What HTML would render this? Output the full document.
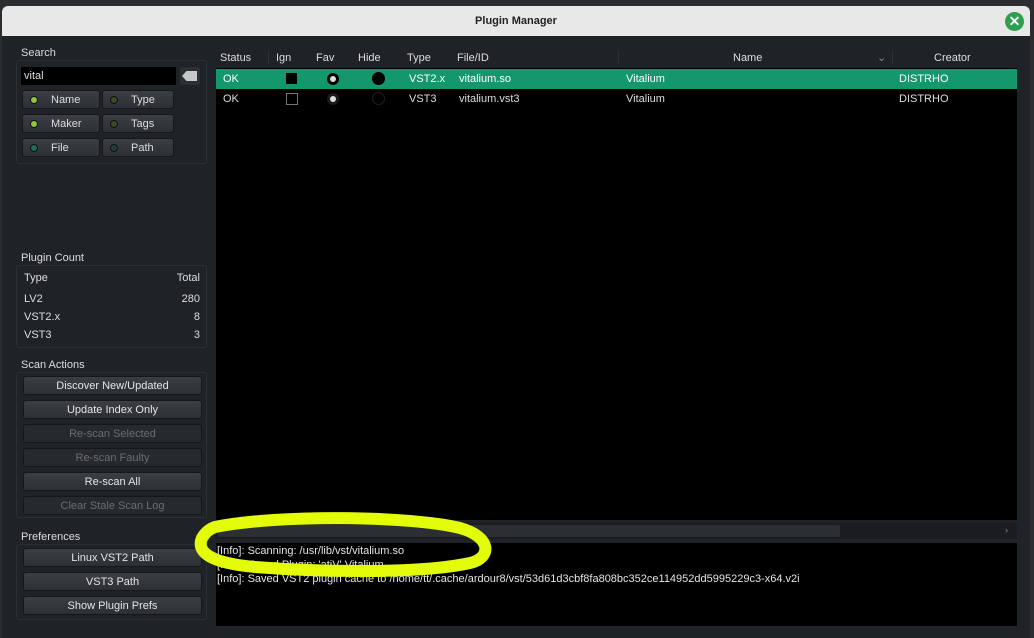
<!DOCTYPE html>
<html><head><style>
*{margin:0;padding:0;box-sizing:border-box}
body{width:1034px;height:638px;background:#2a2c30;font-family:"Liberation Sans",sans-serif;font-size:11px;color:#ddd;position:relative;overflow:hidden}
.a{position:absolute}
.win{left:2px;top:6px;width:1028px;height:632px;background:#1f2226;border-radius:6px 6px 0 0;overflow:hidden}
.title{left:0;top:0;width:1028px;height:30px;background:#e8e8e8;color:#222;font-weight:bold;font-size:11px;text-align:center;line-height:30px}
.grp{border:1px solid #2c2f34;border-radius:3px}
.lbl{color:#ddd;font-size:11px}
.btn{background:linear-gradient(#3b3e43,#2c2f33);border:1px solid #15171a;border-radius:3px;text-align:center;line-height:19px;height:19px;color:#e4e4e4}
.btn.dis{color:#6b6e72;background:#26292d}
.tog{background:linear-gradient(#3b3e43,#2c2f33);border:1px solid #15171a;border-radius:3px;height:19px;line-height:19px;color:#ddd;padding-left:28px}
.led{position:absolute;left:7px;top:5px;width:8px;height:8px;border-radius:50%;border:1px solid #111}
.hdr{top:47px;height:22px;line-height:22px;color:#ddd}
.row{left:216px;width:801px;height:20px;line-height:21px}
.c{position:absolute;top:0}
</style></head><body>
<div class="a win">
 <div class="a title">Plugin Manager</div>
 <div class="a" style="left:1003px;top:6px;width:19px;height:19px;border-radius:50%;background:#2e9e50;color:#fff;font-weight:bold;font-size:14px;line-height:19px;text-align:center">✕</div>
</div>
<!-- left panel -->
<div class="a grp" style="left:16px;top:60px;width:191px;height:104px"></div>
<div class="a lbl" style="left:21px;top:47px">Search</div>
<div class="a" style="left:21px;top:67px;width:155px;height:18px;background:#000;color:#ddd;padding-left:3px;line-height:18px">vital</div>
<div class="a" style="left:180px;top:67px;width:20px;height:18px;background:#2b2e32;border-radius:2px"><div class="a" style="left:2px;top:4px;width:15px;height:10px;background:#c8c8c8;clip-path:polygon(30% 0,100% 0,100% 100%,30% 100%,0 50%)"></div></div>
<div class="a tog" style="left:22px;top:90px;width:78px"><span class="led" style="background:#8cc63f"></span>Name</div>
<div class="a tog" style="left:102px;top:90px;width:72px"><span class="led" style="background:#3e4a24"></span>Type</div>
<div class="a tog" style="left:22px;top:114px;width:78px"><span class="led" style="background:#8cc63f"></span>Maker</div>
<div class="a tog" style="left:102px;top:114px;width:72px"><span class="led" style="background:#3e4a24"></span>Tags</div>
<div class="a tog" style="left:22px;top:138px;width:78px"><span class="led" style="background:#1f6f55"></span>File</div>
<div class="a tog" style="left:102px;top:138px;width:72px"><span class="led" style="background:#1d4038"></span>Path</div>

<div class="a lbl" style="left:21px;top:252px">Plugin Count</div>
<div class="a grp" style="left:16px;top:265px;width:191px;height:83px"></div>
<div class="a" style="left:24px;top:272px">Type</div><div class="a" style="left:160px;top:272px;width:40px;text-align:right">Total</div>
<div class="a" style="left:24px;top:293px">LV2</div><div class="a" style="left:160px;top:293px;width:40px;text-align:right">280</div>
<div class="a" style="left:24px;top:311px">VST2.x</div><div class="a" style="left:160px;top:311px;width:40px;text-align:right">8</div>
<div class="a" style="left:24px;top:329px">VST3</div><div class="a" style="left:160px;top:329px;width:40px;text-align:right">3</div>

<div class="a lbl" style="left:21px;top:359px">Scan Actions</div>
<div class="a grp" style="left:16px;top:372px;width:191px;height:146px"></div>
<div class="a btn" style="left:23px;top:376px;width:179px">Discover New/Updated</div>
<div class="a btn" style="left:23px;top:400px;width:179px">Update Index Only</div>
<div class="a btn dis" style="left:23px;top:424px;width:179px">Re-scan Selected</div>
<div class="a btn dis" style="left:23px;top:448px;width:179px">Re-scan Faulty</div>
<div class="a btn" style="left:23px;top:472px;width:179px">Re-scan All</div>
<div class="a btn dis" style="left:23px;top:496px;width:179px">Clear Stale Scan Log</div>

<div class="a lbl" style="left:21px;top:531px">Preferences</div>
<div class="a grp" style="left:16px;top:544px;width:191px;height:76px"></div>
<div class="a btn" style="left:23px;top:548px;width:179px">Linux VST2 Path</div>
<div class="a btn" style="left:23px;top:572px;width:179px">VST3 Path</div>
<div class="a btn" style="left:23px;top:596px;width:179px">Show Plugin Prefs</div>

<!-- table -->
<div class="a" style="left:216px;top:68px;width:801px;height:452px;background:#000"></div>
<div class="a hdr" style="left:220px">Status</div>
<div class="a hdr" style="left:276px">Ign</div>
<div class="a hdr" style="left:316px">Fav</div>
<div class="a hdr" style="left:358px">Hide</div>
<div class="a hdr" style="left:407px">Type</div>
<div class="a hdr" style="left:457px">File/ID</div>
<div class="a hdr" style="left:733px">Name</div>
<div class="a hdr" style="left:877px;color:#888">⌄</div>
<div class="a hdr" style="left:934px">Creator</div>
<div class="a" style="left:268px;top:50px;width:1px;height:14px;background:#2c2f33"></div>
<div class="a" style="left:618px;top:50px;width:1px;height:14px;background:#2c2f33"></div>
<div class="a" style="left:892px;top:50px;width:1px;height:14px;background:#2c2f33"></div>

<div class="a row" style="top:69px;background:#13986e;color:#fff">
 <span class="c" style="left:7px">OK</span>
 <span class="c" style="left:70px;top:4px;width:11px;height:11px;background:#000"></span>
 <span class="c" style="left:111px;top:4px;width:12px;height:12px;border-radius:50%;background:#000"><span class="a" style="left:3px;top:3px;width:6px;height:6px;border-radius:50%;background:#ddd"></span></span>
 <span class="c" style="left:156px;top:3px;width:13px;height:13px;border-radius:50%;background:#000"></span>
 <span class="c" style="left:193px">VST2.x</span>
 <span class="c" style="left:243px">vitalium.so</span>
 <span class="c" style="left:410px">Vitalium</span>
 <span class="c" style="left:683px">DISTRHO</span>
</div>
<div class="a row" style="top:89px;color:#ddd">
 <span class="c" style="left:7px">OK</span>
 <span class="c" style="left:70px;top:4px;width:12px;height:12px;border:1px solid #777"></span>
 <span class="c" style="left:111px;top:4px;width:12px;height:12px;border-radius:50%;background:#1a1a1a"><span class="a" style="left:3px;top:3px;width:6px;height:6px;border-radius:50%;background:#ddd"></span></span>
 <span class="c" style="left:156px;top:3px;width:13px;height:13px;border-radius:50%;border:1px solid #1e1e1e"></span>
 <span class="c" style="left:193px">VST3</span>
 <span class="c" style="left:243px">vitalium.vst3</span>
 <span class="c" style="left:410px">Vitalium</span>
 <span class="c" style="left:683px">DISTRHO</span>
</div>
<!-- scrollbar -->
<div class="a" style="left:216px;top:523px;width:801px;height:16px;background:#1a1c1f"></div>
<div class="a" style="left:218px;top:525px;width:622px;height:12px;background:#2b2e32;border-radius:2px"></div>
<div class="a" style="left:1005px;top:525px;color:#888;font-size:9px">›</div>
<!-- log -->
<div class="a" style="left:216px;top:543px;width:801px;height:83px;background:#000"></div>
<div class="a" style="left:217px;top:545px;color:#e4e4e4">[Info]: Scanning: /usr/lib/vst/vitalium.so</div>
<div class="a" style="left:217px;top:559px;color:#e4e4e4">[Info]: Found Plugin: 'atiV' Vitalium</div>
<div class="a" style="left:217px;top:573px;color:#e4e4e4">[Info]: Saved VST2 plugin cache to /home/tt/.cache/ardour8/vst/53d61d3cbf8fa808bc352ce114952dd5995229c3-x64.v2i</div>
<!-- annotation -->
<svg class="a" style="left:0;top:0" width="1034" height="638"><path d="M215,527 C280,514 410,516 460,528 C492,537 492,558 470,563 C420,574 320,572 255,567 C210,563 196,552 202,538 C206,531 212,528 215,527 Z" fill="none" stroke="#e2fc0a" stroke-width="12" stroke-linejoin="round"/></svg>
</body></html>
